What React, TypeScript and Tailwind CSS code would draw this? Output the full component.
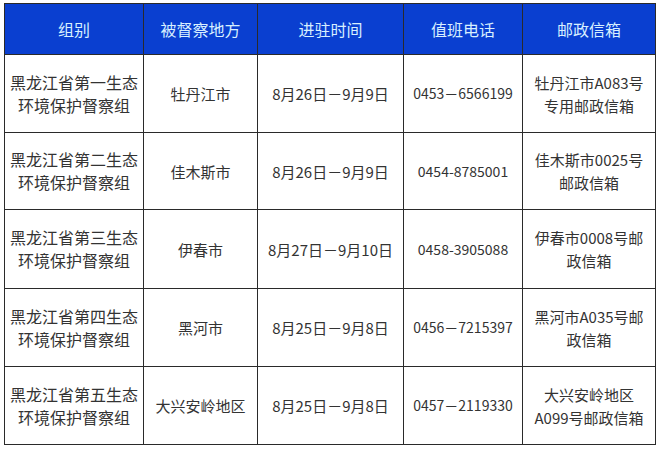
import React from "react";

const rows = [
  ["黑龙江省第一生态\n环境保护督察组", "牡丹江市", "8月26日－9月9日", "0453－6566199", "牡丹江市A083号\n专用邮政信箱"],
  ["黑龙江省第二生态\n环境保护督察组", "佳木斯市", "8月26日－9月9日", "0454-8785001", "佳木斯市0025号\n邮政信箱"],
  ["黑龙江省第三生态\n环境保护督察组", "伊春市", "8月27日－9月10日", "0458-3905088", "伊春市0008号邮\n政信箱"],
  ["黑龙江省第四生态\n环境保护督察组", "黑河市", "8月25日－9月8日", "0456－7215397", "黑河市A035号邮\n政信箱"],
  ["黑龙江省第五生态\n环境保护督察组", "大兴安岭地区", "8月25日－9月8日", "0457－2119330", "大兴安岭地区\nA099号邮政信箱"],
];

const heads = ["组别", "被督察地方", "进驻时间", "值班电话", "邮政信箱"];
const widths = ["w-[139px]", "w-[114px]", "w-[146px]", "w-[119px]", "w-[133px]"];
const rowH = ["h-[78px]", "h-[77px]", "h-[79px]", "h-[78px]", "h-[78px]"];
const sizes = ["text-[16px]", "text-[15px]", "text-[15px]", "text-[14px]", "text-[15px]"];

export default function App() {
  return (
    <div className="w-[661px] h-[451px] bg-white pt-[3px] pl-[4px]" style={{ fontFamily: '"Noto Sans CJK SC", "Liberation Sans", sans-serif' }}>
      <table className="border-collapse table-fixed">
        <thead>
          <tr className="h-[51px] bg-[#0a3fd0]">
            {heads.map((h, i) => (
              <th key={i} className={`${widths[i]} border border-[#2a2a2a] text-[#d8efff] text-[16px] font-normal text-center align-middle`}>
                {h}
              </th>
            ))}
          </tr>
        </thead>
        <tbody>
          {rows.map((r, ri) => (
            <tr key={ri} className={rowH[ri]}>
              {r.map((c, ci) => (
                <td
                  key={ci}
                  className={`border border-[#2a2a2a] text-[#333333] text-center align-middle whitespace-pre-line leading-[23px] ${sizes[ci]}`}
                >
                  {c}
                </td>
              ))}
            </tr>
          ))}
        </tbody>
      </table>
    </div>
  );
}
